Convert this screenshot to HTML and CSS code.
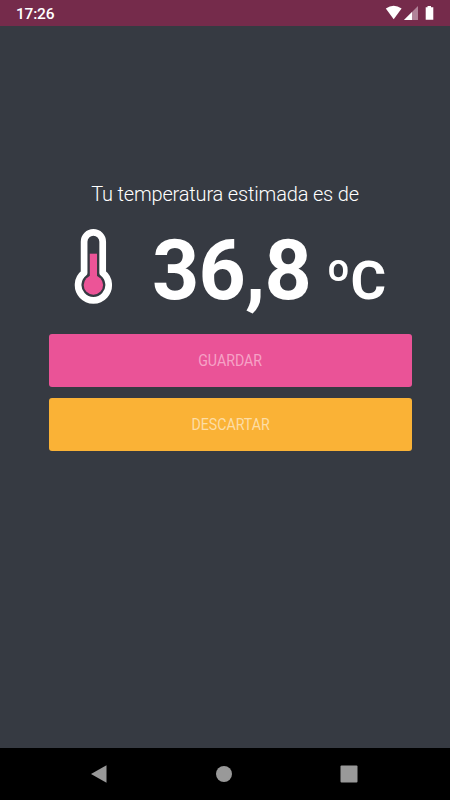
FILE: index.html
```html
<!DOCTYPE html>
<html lang="es">
<head>
    <meta charset="UTF-8">
    <meta name="viewport" content="width=device-width, initial-scale=1.0">
    <title>Temperatura</title>
    <link rel="stylesheet" href="styles.css">
</head>
<body>

    <div class="status-bar">
        <span class="clock">17:26</span>
        <svg class="status-icons" width="50" height="26" viewBox="0 0 50 26">
            <path d="M0.8 8.6 Q8.7 2.8 16.6 8.6 L8.7 19.2 Z" fill="#fff"/>
            <path d="M19 20 L33 6 V20 Z" fill="#b18399"/>
            <path d="M19 20 L27 12 V20 Z" fill="#fff"/>
            <path d="M42.5 6 H46 V7.2 H48.3 V19.8 H40.7 V7.2 H42.5 Z" fill="#fff"/>
        </svg>
    </div>

    <div class="content">
        <div class="title">Tu temperatura estimada es de</div>
        <div class="reading">
            <svg class="thermometer" width="40" height="78" viewBox="0 0 40 78">
                <path d="M11.1 45.9 V14.7 a9.3 9.3 0 0 1 18.6 0 V45.9 A15.3 15.3 0 1 1 11.1 45.9 Z" fill="none" stroke="#fff" stroke-width="6.7" stroke-linejoin="round"/>
                <rect x="16.8" y="26.7" width="7.2" height="26" fill="#ec5497"/>
                <circle cx="20.4" cy="58" r="9.7" fill="#ec5497"/>
            </svg>
            <span class="value">36,8</span>
            <span class="unit">ºC</span>
        </div>
        <button class="btn save"><span>GUARDAR</span></button>
        <button class="btn discard"><span>DESCARTAR</span></button>
    </div>

    <div class="nav-bar">
        <svg width="18" height="18" viewBox="0 0 18 18"><path d="M1 9 L16.5 0.3 V17.7 Z" fill="#999"/></svg>
        <svg width="18" height="18" viewBox="0 0 18 18"><circle cx="9" cy="9" r="8" fill="#999"/></svg>
        <svg width="18" height="18" viewBox="0 0 18 18"><rect x="0.5" y="0.5" width="17" height="17" rx="1" fill="#999"/></svg>
    </div>

</body>
</html>
```

FILE: styles.css
```css
body {
    margin: 0;
    height: 800px;
    display: flex;
    flex-direction: column;
    background-color: #363a42;
    font-family: Roboto, sans-serif;
    color: white;
    overflow: hidden;
}
.status-bar {
    display: flex;
    justify-content: space-between;
    height: 26px;
    padding: 0 15px 0 16px;
    background-color: #752b4b;
}
.clock {
    font-size: 15.5px;
    font-weight: 500;
    letter-spacing: -0.2px;
    line-height: 28px;
}
.content {
    flex: 1;
    padding: 154px 38px 0 49px;
}
.title {
    width: 352px;
    font-size: 20px;
    font-weight: 300;
    letter-spacing: -0.17px;
    line-height: 28px;
    text-align: center;
}
.reading {
    display: flex;
    align-items: baseline;
    height: 126px;
    padding-left: 24px;
}
.thermometer {
    align-self: flex-start;
    margin-top: 19px;
}
.value {
    margin-left: 39px;
    font-size: 82.5px;
    font-weight: 700;
    letter-spacing: -0.8px;
    line-height: 126px;
}
.unit {
    margin-left: 15px;
    font-size: 54.5px;
    font-weight: 700;
    letter-spacing: -0.5px;
}
.btn {
    display: block;
    width: 363px;
    height: 53px;
    margin-bottom: 11px;
    border: none;
    border-radius: 3px;
    font-family: Roboto, sans-serif;
    font-size: 16.5px;
    font-weight: 400;
    cursor: pointer;
}
.btn span {
    display: inline-block;
    transform: scaleX(0.86);
}
.save {
    background-color: #ea5397;
    color: #f6a2c6;
}
.discard {
    background-color: #fab236;
    color: #fddda5;
}
.nav-bar {
    display: flex;
    justify-content: space-between;
    height: 35px;
    padding: 17px 92px 0 90px;
    background-color: black;
}
```
